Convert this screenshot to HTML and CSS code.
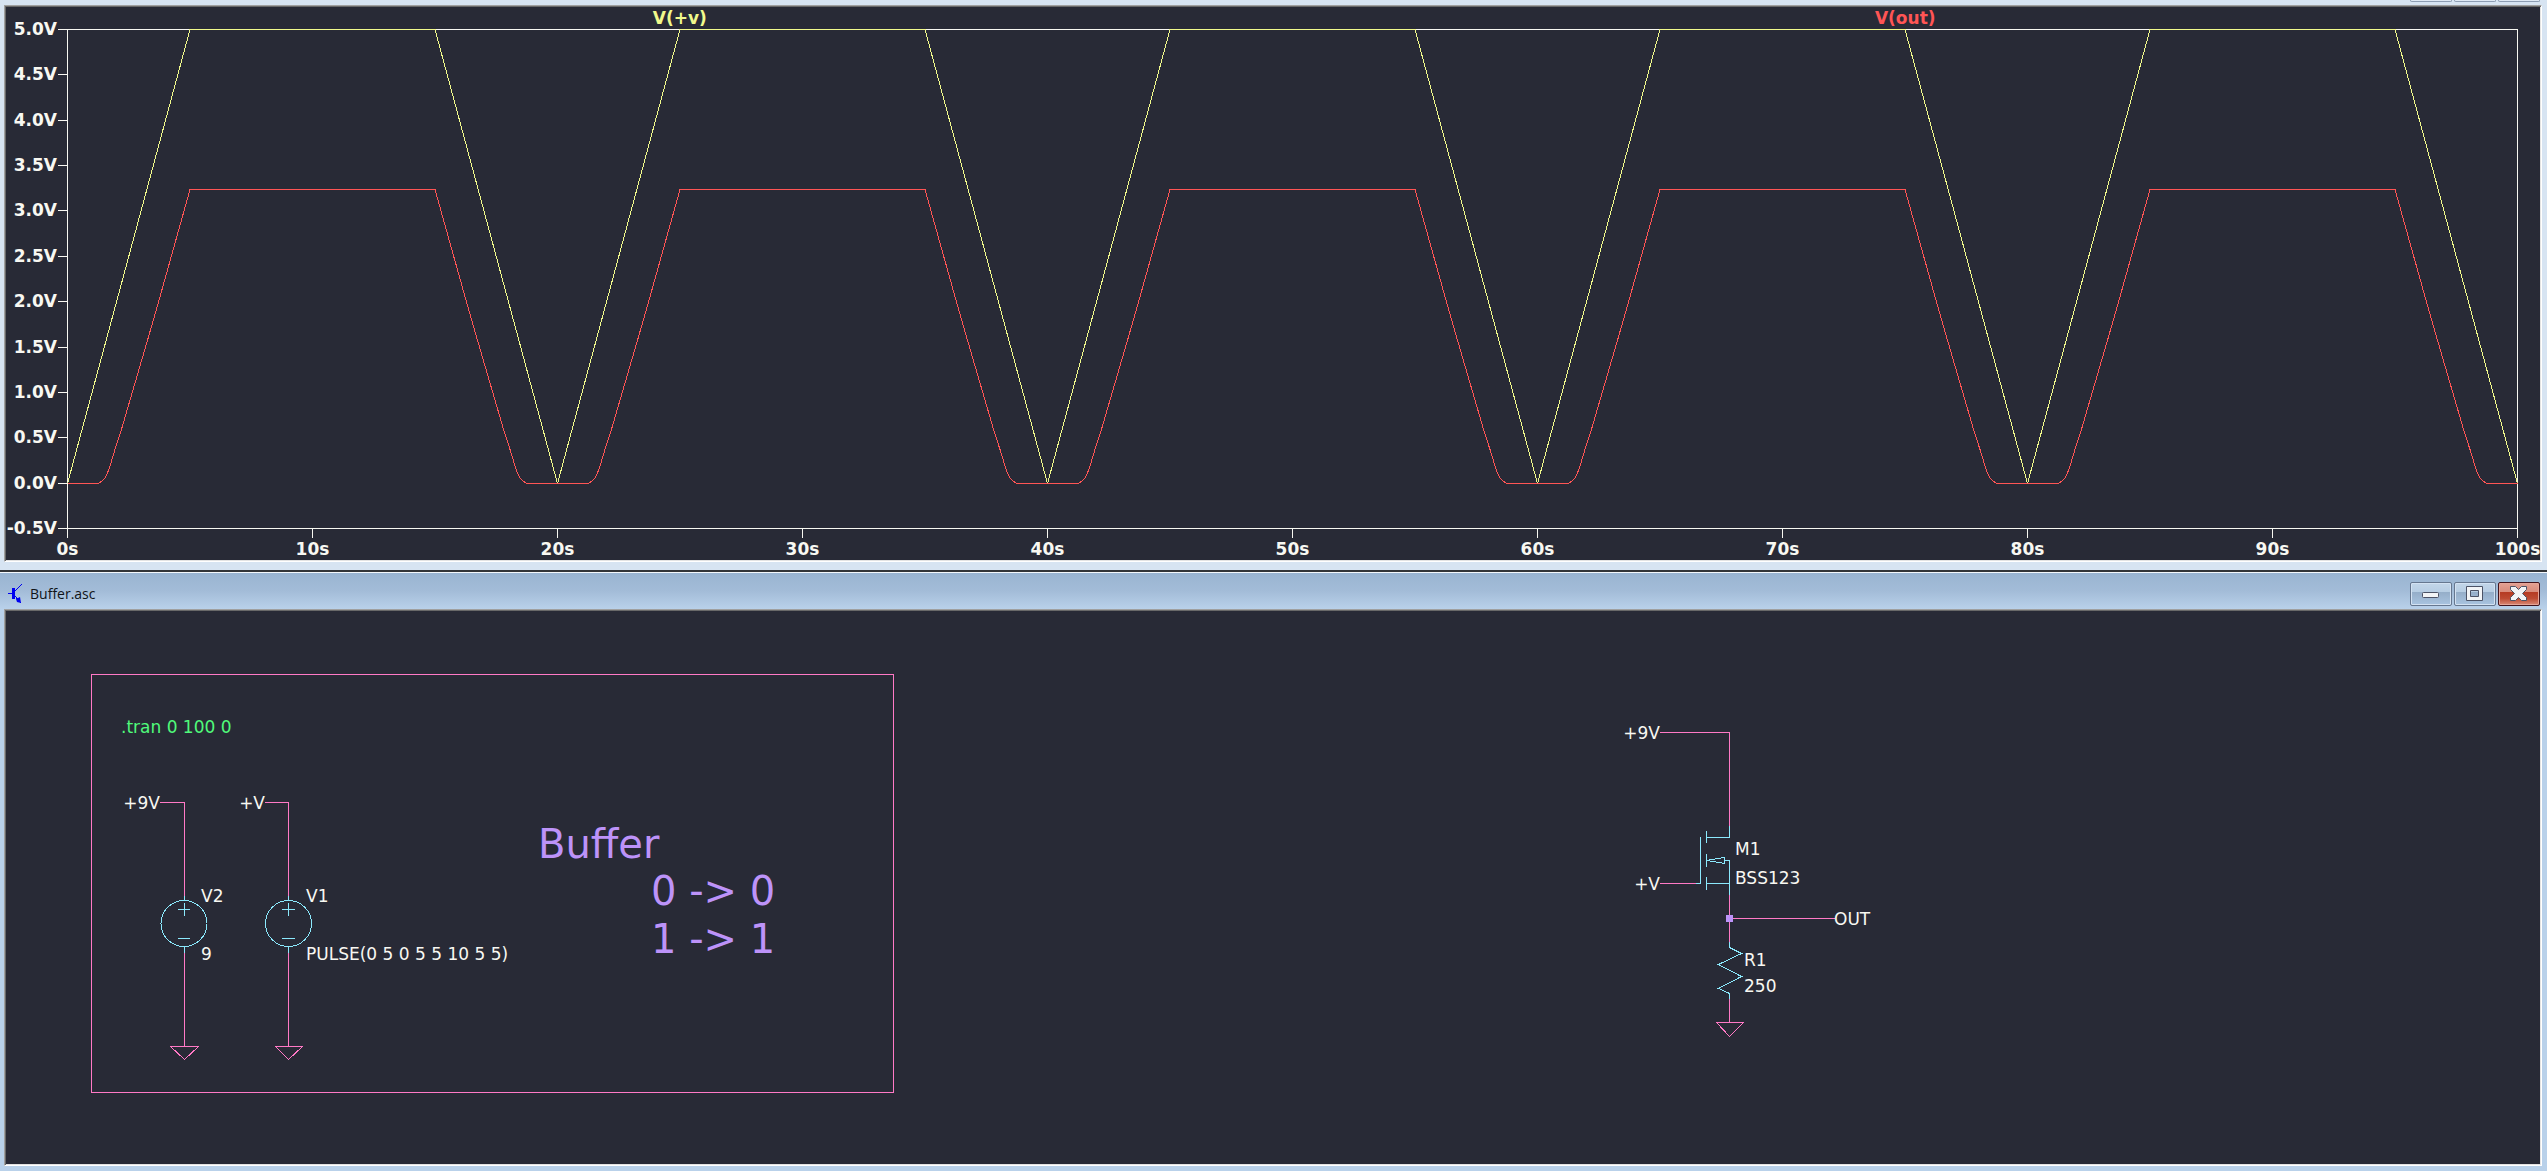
FILE: index.html
```html
<!DOCTYPE html>
<html lang="en">
<head>
<meta charset="utf-8">
<title>Buffer.asc</title>
<link rel="stylesheet" href="styles.css">
</head>
<body>
<section class="window window-plot" aria-label="Waveform viewer">
  <div class="clipped-controls">
    <button type="button" aria-label="Minimize plot"></button>
    <button type="button" aria-label="Maximize plot"></button>
    <button type="button" aria-label="Close plot"></button>
  </div>
  <div class="well">
    <div class="plot">
      <div class="traces">
        <span class="trace-in">V(+v)</span>
        <span class="trace-out">V(out)</span>
      </div>
      <ol class="y-axis">
        <li>5.0V</li><li>4.5V</li><li>4.0V</li><li>3.5V</li><li>3.0V</li><li>2.5V</li>
        <li>2.0V</li><li>1.5V</li><li>1.0V</li><li>0.5V</li><li>0.0V</li><li>-0.5V</li>
      </ol>
      <div class="graph">
        <svg viewBox="0 0 2451 500" preserveAspectRatio="none" role="img" aria-label="V(+v) and V(out) over 100 seconds">
          <defs>
            <path id="in-pulse" d="M.5 454.5L123 .5H368L490.5 454.5"/>
            <path id="out-pulse" d="M.5 454.5H31L35 452L38 449L40.5 444L43 437L47.5 422L54 402L61 378L80 313L91.5 273L123 160.5H368L399.5 273L411 313L430 378L437 402L443.5 422L448 437L450.5 444L453 449L456 452L460 454.5H490.5"/>
          </defs>
          <rect class="frame" x=".5" y=".5" width="2450" height="499"/>
          <g class="curve-in">
            <use href="#in-pulse"/><use href="#in-pulse" x="490"/><use href="#in-pulse" x="980"/><use href="#in-pulse" x="1470"/><use href="#in-pulse" x="1960"/>
          </g>
          <g class="curve-out">
            <use href="#out-pulse"/><use href="#out-pulse" x="490"/><use href="#out-pulse" x="980"/><use href="#out-pulse" x="1470"/><use href="#out-pulse" x="1960"/>
          </g>
        </svg>
      </div>
      <ol class="x-axis">
        <li>0s</li><li>10s</li><li>20s</li><li>30s</li><li>40s</li><li>50s</li>
        <li>60s</li><li>70s</li><li>80s</li><li>90s</li><li>100s</li>
      </ol>
    </div>
  </div>
</section>

<section class="window window-schematic" aria-label="Schematic editor">
  <header class="titlebar">
    <svg class="app-icon" width="16" height="22" viewBox="0 0 16 22" aria-hidden="true">
      <path d="M1 10h5v1H1zM5 5h3v11H5z"/>
      <path class="lead" d="M8 8L15 1M8 13L14 20"/>
      <path d="M9 16l4-2 1 6-4-1z"/>
    </svg>
    <h1>Buffer.asc</h1>
    <div class="controls">
      <button type="button" class="control" aria-label="Minimize">
        <svg width="42" height="24" viewBox="0 0 42 24"><rect class="glyph" x="12.5" y="10.5" width="16" height="5" rx="1"/></svg>
      </button>
      <button type="button" class="control" aria-label="Maximize">
        <svg width="42" height="24" viewBox="0 0 42 24"><path class="glyph" fill-rule="evenodd" d="M12.5 4.5h16v14h-16zM16.5 8.5h8v6h-8z"/></svg>
      </button>
      <button type="button" class="control control-close" aria-label="Close">
        <svg width="42" height="24" viewBox="0 0 42 24"><path class="glyph" d="M12.5 4.5h5l3 3 3-3h5v3l-4 4 4 4v3h-5l-3-3-3 3h-5v-3l4-4-4-4z"/></svg>
      </button>
    </div>
  </header>
  <div class="well">
    <svg class="schematic" role="img" aria-label="Buffer circuit">
      <g class="wire">
        <rect x="85.5" y="63.5" width="802" height="418"/>
        <path d="M154 191.5H178.5V285M178.5 342V435M164.5 435.5H192.5L178.5 448.5Z"/>
        <path d="M259 191.5H282.5V285M282.5 342V435M269.5 435.5H296.5L282.5 448.5Z"/>
        <path d="M1654 121.5H1723.5V215M1654 272.5H1690M1723.5 284V331M1723.5 307.5H1829M1723.5 388V411M1710.5 411.5H1737.5L1723.5 425.5Z"/>
      </g>
      <g class="part">
        <circle cx="178" cy="312.5" r="23"/>
        <path d="M178.5 285v5M178.5 335v7M172 298.5h12M178.5 292v13M172 327.5h12"/>
        <circle cx="282.5" cy="312.5" r="23"/>
        <path d="M282.5 285v5M282.5 335v7M276 298.5h13M282.5 292v13M276 327.5h13"/>
        <path d="M1723.5 215V226.5H1700.5M1700.5 220v12M1700.5 243v13M1700.5 266v13M1694.5 226V272.5H1690M1700.5 272.5H1723.5M1718.5 249.5H1723.5V284M1700.5 249.5L1718.5 246.5V252.5Z"/>
        <path d="M1723.5 331V336.5L1735.5 342.5L1712.5 353.5L1735.5 365.5L1712.5 377.5L1723.5 382.5V388"/>
      </g>
      <rect class="junction" x="1720" y="304" width="7" height="7"/>
      <g class="label">
        <text class="directive" x="115" y="122">.tran 0 100 0</text>
        <text class="net" x="154" y="198">+9V</text>
        <text class="net" x="259" y="198">+V</text>
        <text x="195" y="291">V2</text>
        <text x="195" y="349">9</text>
        <text x="300" y="291">V1</text>
        <text x="300" y="349">PULSE(0 5 0 5 5 10 5 5)</text>
        <text class="net" x="1654" y="128">+9V</text>
        <text class="net" x="1654" y="279">+V</text>
        <text x="1729" y="244">M1</text>
        <text x="1729" y="273">BSS123</text>
        <text x="1828" y="314">OUT</text>
        <text x="1738" y="355">R1</text>
        <text x="1738" y="381">250</text>
      </g>
      <g class="note">
        <text x="532" y="247">Buffer</text>
        <text x="645" y="294">0 -&gt; 0</text>
        <text x="645" y="342">1 -&gt; 1</text>
      </g>
    </svg>
  </div>
</section>
</body>
</html>
```
FILE: styles.css
```css
* { box-sizing: border-box; }

body {
  margin: 0;
  height: 100vh;
  display: grid;
  grid-template-rows: 570fr 601fr;
  overflow: hidden;
  background: #b9d1ea;
  font-family: "DejaVu Sans", Verdana, sans-serif;
  font-size: 17px;
  color: #f8f8f2;
}

ol { list-style: none; margin: 0; padding: 0; }

.window {
  display: flex;
  flex-direction: column;
  min-width: 0;
  min-height: 0;
}

.window-plot {
  padding: 0 5px 8px 4px;
  background: #d7e4f2;
}

.window-schematic {
  padding: 0 5px 5px 4px;
  border-top: 2px solid #333538;
  background: #b9d1ea;
}

/* Sunken client area */
.well {
  flex: 1;
  min-height: 0;
  display: flex;
  padding: 1px;
  border: 1px solid;
  border-color: #a0a0a0 #fff #fff #a0a0a0;
  box-shadow: inset 1px 1px #696969, inset -1px -1px #e3e3e3;
  background: #282a36;
}

.clipped-controls {
  height: 5px;
  display: flex;
  justify-content: flex-end;
  gap: 2px;
  padding-right: 2px;
}

.clipped-controls button {
  width: 42px;
  height: 2px;
  padding: 0;
  border: 1px solid #8d9db3;
  border-top: 0;
  border-radius: 0 0 2px 2px;
  background: #dfe9f4;
}

/* Plot */
.plot {
  flex: 1;
  display: grid;
  grid-template: 22px 1fr 31px / 61px 1fr;
  padding-right: 22px;
  font-weight: bold;
}

.traces {
  grid-column: 2;
  display: flex;
  line-height: 22px;
  text-align: center;
}

.traces span { flex: 1; }
.trace-in { color: #f1fa8c; }
.trace-out { color: #ff5555; }

.y-axis {
  display: flex;
  flex-direction: column;
  justify-content: space-between;
}

.y-axis li {
  display: flex;
  justify-content: flex-end;
  gap: 1px;
  height: 1px;
  line-height: 1px;
}

.y-axis li::after {
  content: "";
  width: 9px;
  height: 1px;
  background: #f8f8f2;
}

.graph { min-height: 0; position: relative; }

.graph svg {
  position: absolute;
  inset: 0;
  width: 100%;
  height: 100%;
  fill: none;
  shape-rendering: crispEdges;
}

.frame { stroke: #f8f8f2; }
.curve-in { stroke: #f1fa8c; }
.curve-out { stroke: #ff5555; }

.x-axis {
  grid-column: 2;
  display: flex;
  justify-content: space-between;
}

.x-axis li {
  width: 1px;
  display: flex;
  flex-direction: column;
  align-items: center;
  white-space: nowrap;
  line-height: 22px;
}

.x-axis li::before {
  content: "";
  width: 1px;
  height: 9px;
  background: #f8f8f2;
}

/* Title bar */
.titlebar {
  display: flex;
  align-items: center;
  height: 37px;
  margin: 0 -5px 0 -4px;
  padding: 6px 7px 0;
  border-top: 1px solid #f4f8fc;
  background: linear-gradient(#99b4d1, #a3bcd8 50%, #b9d1ea);
}

.app-icon { fill: #0000f0; }
.lead { stroke: #0000f0; stroke-width: 1; shape-rendering: crispEdges; }

.titlebar h1 {
  flex: 1;
  margin: 0;
  padding-left: 7px;
  font: 14px/20px "Open Sans", "Segoe UI", sans-serif;
  color: #101418;
}

.controls { display: flex; gap: 2px; }

.control {
  width: 42px;
  height: 24px;
  padding: 0;
  border: 1px solid #66778f;
  border-radius: 2px;
  box-shadow: inset 0 0 0 1px #d3e2f2;
  background: linear-gradient(#c3d6e9, #b6cde3 42%, #95aec9 43%, #a9c4e0);
}

.control svg { display: block; margin: -1px; }

.control-close {
  border-color: #43141c;
  box-shadow: inset 0 0 0 1px #e5a598;
  background: linear-gradient(#e4a193, #d88b7b 42%, #b63b23 43%, #bd4a32 70%, #d98a76);
}

.glyph { fill: #f2f4f6; stroke: #4c5366; }

/* Schematic */
.schematic {
  flex: 1;
  width: 100%;
  height: 100%;
  fill: none;
  stroke-width: 1;
}

.wire { stroke: #ff79c6; shape-rendering: crispEdges; }
.part { stroke: #8be9fd; shape-rendering: crispEdges; }
.junction { fill: #bd93f9; }
.label { fill: #f8f8f2; }
.net { text-anchor: end; }
.label .directive { fill: #50fa7b; }
.note { fill: #bd93f9; font-size: 40px; }
```
